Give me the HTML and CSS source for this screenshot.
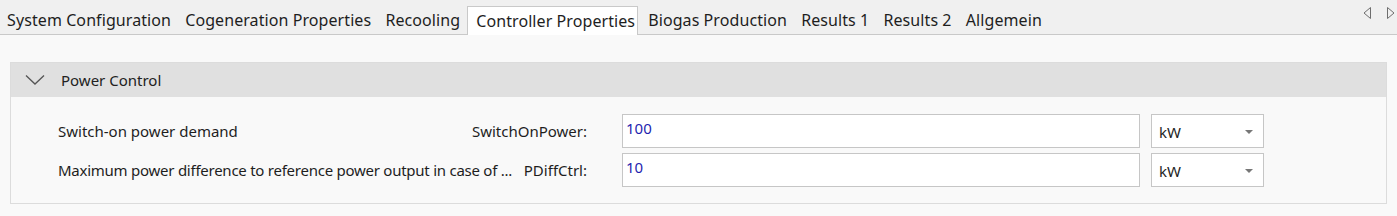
FILE: index.html
```html
<!DOCTYPE html>
<html>
<head>
<meta charset="utf-8">
<link rel="stylesheet" href="styles.css">
</head>
<body>
<div class="tabbar">
  <div class="tabs">
    <div class="tab">System Configuration</div>
    <div class="tab">Cogeneration Properties</div>
    <div class="tab">Recooling</div>
    <div class="tab active">Controller Properties</div>
    <div class="tab">Biogas Production</div>
    <div class="tab">Results 1</div>
    <div class="tab">Results 2</div>
    <div class="tab">Allgemein</div>
  </div>
  <div class="scroll">
    <svg width="10" height="14" viewBox="0 0 10 14"><path d="M8.5 1.5 L2 7 L8.5 12.5 Z" fill="none" stroke="#6e6e6e" stroke-width="1"/></svg>
    <svg width="10" height="14" viewBox="0 0 10 14"><path d="M1.5 1.5 L8 7 L1.5 12.5 Z" fill="none" stroke="#6e6e6e" stroke-width="1"/></svg>
  </div>
</div>
<div class="content">
  <div class="panel">
    <div class="panel-head">
      <svg class="chev" width="20" height="12" viewBox="0 0 20 12"><path d="M1 1.5 L10 10 L19 1.5" fill="none" stroke="#555" stroke-width="1.3"/></svg>
      <span>Power Control</span>
    </div>
    <div class="panel-body">
      <div class="row">
        <div class="labels">
          <span class="desc">Switch-on power demand</span>
          <span class="name">SwitchOnPower:</span>
        </div>
        <div class="input">100</div>
        <div class="select"><span>kW</span><span class="arrow"></span></div>
      </div>
      <div class="row">
        <div class="labels">
          <span class="desc desc-long">Maximum power difference to reference power output in case of ...</span>
          <span class="name">PDiffCtrl:</span>
        </div>
        <div class="input">10</div>
        <div class="select"><span>kW</span><span class="arrow"></span></div>
      </div>
    </div>
  </div>
</div>
</body>
</html>
```
FILE: styles.css
```css
html, body {
  margin: 0;
  padding: 0;
  background: #f9f9f9;
  font-family: "Noto Sans", "Open Sans", sans-serif;
  color: #1e1e1e;
}
.tabbar {
  height: 34px;
  background: #f0f0f0;
  border-bottom: 1px solid #c9c9c9;
  display: flex;
  align-items: flex-end;
  justify-content: space-between;
}
.tabs {
  display: flex;
  align-items: flex-end;
}
.tab {
  font-size: 16px;
  letter-spacing: 0.08px;
  height: 28px;
  line-height: 28px;
  padding: 0 7.1px;
  white-space: nowrap;
  box-sizing: border-box;
}
.tab.active {
  background: #fff;
  border: 1px solid #c9c9c9;
  border-bottom: none;
  height: 29px;
  line-height: 29px;
  margin-bottom: -1px;
  padding: 0 2px 0 8px;
  margin-right: 3px;
}
.scroll {
  display: flex;
  gap: 14px;
  padding: 0 1px 8px 0;
  align-self: center;
}
.scroll svg { display: block; }
.content {
  padding: 27px 10px 0 10px;
}
.panel {
  border: 1px solid #dcdcdc;
  background: #f9f9f9;
}
.panel-head {
  height: 34px;
  background: #e0e0e0;
  display: flex;
  align-items: center;
  font-size: 15px;
  color: #222;
}
.chev {
  margin-left: 14px;
  margin-right: 16px;
}
.panel-body {
  padding: 17px 0 16px 47px;
  display: flex;
  flex-direction: column;
  gap: 5px;
}
.row {
  display: flex;
  align-items: center;
  height: 34px;
  font-size: 15px;
}
.labels {
  width: 529px;
  display: flex;
  align-items: center;
}
.desc {
  flex: 1;
  min-width: 0;
  white-space: nowrap;
  overflow: hidden;
  text-overflow: ellipsis;
  margin-right: 6px;
}
.desc-long {
  letter-spacing: -0.25px;
}
.name {
  white-space: nowrap;
}
.input {
  margin-left: 35px;
  width: 518px;
  height: 34px;
  box-sizing: border-box;
  border: 1px solid #c6c6c6;
  background: #fff;
  color: #1f1fb0;
  padding: 3px 0 0 3px;
}
.select {
  margin-left: 11px;
  width: 113px;
  height: 34px;
  box-sizing: border-box;
  border: 1px solid #c6c6c6;
  background: #fff;
  display: flex;
  align-items: center;
  justify-content: space-between;
  padding: 2px 10px 0 7px;
}
.arrow {
  width: 0;
  height: 0;
  border-left: 4px solid transparent;
  border-right: 4px solid transparent;
  border-top: 4px solid #777;
}
```
